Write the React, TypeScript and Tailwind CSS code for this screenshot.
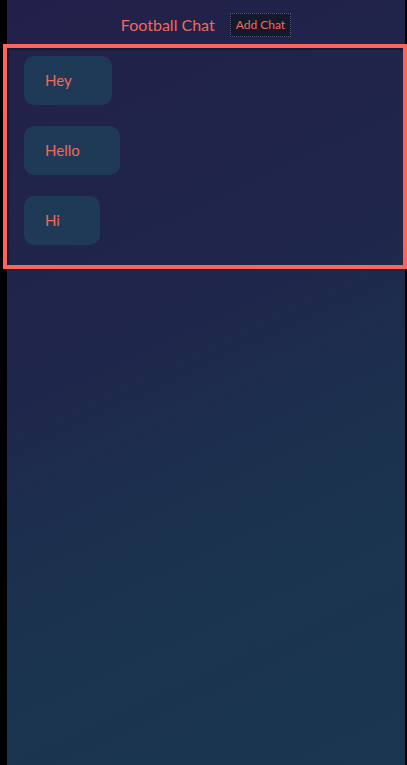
const chats = ["Hey", "Hello", "Hi"];

export default function App() {
  return (
    <div className="flex h-[765px] w-[407px] overflow-hidden bg-black font-['Lato','Noto_Sans',sans-serif]">
      <div className="ml-[7px] mr-[2px] flex flex-1 flex-col bg-[linear-gradient(155deg,#22204a_0%,#1f264b_40%,#1b324e_65%,#1a3750_100%)]">
        <header className="flex h-[48px] items-center justify-center gap-[15px] pt-[2px]">
          <h1 className="text-[16px] text-[#f4675b]">Football Chat</h1>
          <button className="h-[24px] border border-dotted border-[#55597a] bg-[#141a2c] px-[5px] text-[12px] text-[#f4675b]">
            Add Chat
          </button>
        </header>

        <div className="mr-[2px] flex flex-col items-start gap-[21px] border-t-2 border-l-2 border-[#161a33] pb-[20px] pl-[15px] pt-[6px] outline-4 outline-[#fd645a] shadow-[0_4px_0_#141627]">
          {chats.map((chat) => (
            <div
              key={chat}
              className="flex h-[49px] items-center rounded-[10px] bg-[#1f3a56] pl-[21px] pr-[40px] text-[15px] text-[#f4675b]"
            >
              {chat}
            </div>
          ))}
        </div>
      </div>
    </div>
  );
}
